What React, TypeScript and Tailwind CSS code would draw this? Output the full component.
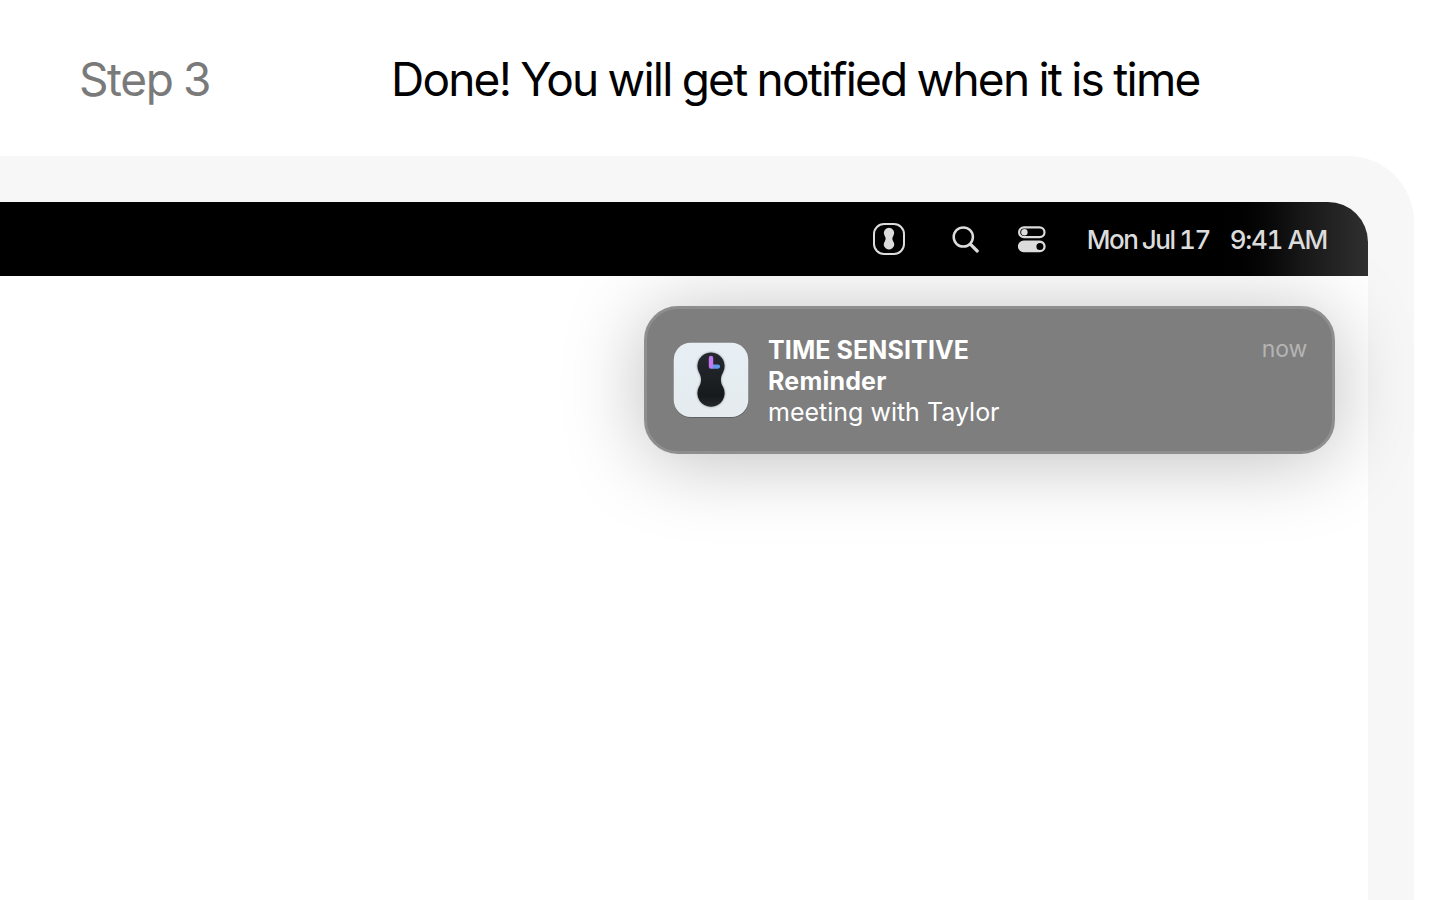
function KettlebellIcon() {
  return (
    <svg width="32" height="32" viewBox="0 0 32 32" fill="none">
      <rect x="1" y="1" width="30" height="30" rx="10" stroke="#dcdcdc" strokeWidth="2" />
      <path
        d="M16 4.8A5.2 5.2 0 0 1 20.4 12.8C19 15 19 16.5 20.4 18.7A5.1 5.1 0 1 1 11.6 18.7C13 16.5 13 15 11.6 12.8A5.2 5.2 0 0 1 16 4.8Z"
        fill="#dcdcdc"
      />
    </svg>
  )
}

function SearchIcon() {
  return (
    <svg width="28" height="28" viewBox="0 0 28 28" fill="none" stroke="#dcdcdc">
      <circle cx="11.3" cy="12" r="9.6" strokeWidth="2.5" />
      <path d="M18.3 19.2L25.2 26" strokeWidth="3.2" strokeLinecap="round" />
    </svg>
  )
}

function ControlCenterIcon() {
  return (
    <svg width="28" height="28" viewBox="0 0 28 28" fill="none">
      <rect x="1.1" y="2.4" width="25.4" height="9.8" rx="4.9" stroke="#dcdcdc" strokeWidth="2.2" />
      <circle cx="6.4" cy="7.3" r="3.2" fill="#dcdcdc" />
      <path
        fillRule="evenodd"
        d="M5.7 15.6H21.9a5.7 5.7 0 0 1 0 11.6H5.7a5.7 5.7 0 0 1 0-11.6ZM21.9 17.9a3.5 3.5 0 1 0 0 7a3.5 3.5 0 0 0 0-7Z"
        fill="#dcdcdc"
      />
    </svg>
  )
}

const bodyPath =
  'M38 10.4A13.6 13.6 0 0 1 50 30.4C47.2 35 47.2 40.4 50 44.8A13.6 13.6 0 1 1 26 44.8C28.8 40.4 28.8 35 26 30.4A13.6 13.6 0 0 1 38 10.4Z'

function AppIcon() {
  return (
    <svg width="76" height="76" viewBox="0 0 76 76" fill="none" className="shrink-0">
      <defs>
        <linearGradient id="tile" x1="0" y1="0" x2="0" y2="1">
          <stop stopColor="#e7eff5" />
          <stop offset="1" stopColor="#e5ebee" />
        </linearGradient>
        <linearGradient id="body" x1="0" y1="0" x2="0" y2="1">
          <stop stopColor="#26292e" />
          <stop offset="0.35" stopColor="#1f2327" />
          <stop offset="0.8" stopColor="#171a1c" />
          <stop offset="1" stopColor="#26292b" />
        </linearGradient>
        <filter id="soft" x="-30%" y="-30%" width="160%" height="160%">
          <feGaussianBlur stdDeviation="1.2" />
        </filter>
      </defs>
      <rect x="0.8" y="1.3" width="74.6" height="74.6" rx="17" fill="#5e6265" />
      <rect x="0.7" y="0.7" width="74.6" height="74.4" rx="17" fill="url(#tile)" />
      <path d={bodyPath} fill="#343a40" opacity="0.6" filter="url(#soft)" />
      <path d={bodyPath} fill="url(#body)" />
      <path d="M39 24.6H45" stroke="#5e98e9" strokeWidth="4.2" strokeLinecap="round" />
      <path d="M38 16V24.6" stroke="#c278f0" strokeWidth="4.4" strokeLinecap="round" />
    </svg>
  )
}

function MenuBar() {
  return (
    <div className="relative z-10 flex h-[74px] items-center justify-end rounded-tr-[40px] bg-linear-to-r from-black from-88% via-[#161616] via-95% to-[#303030] pr-[41px] text-[26px] font-medium text-[#dcdcdc] tabular-nums">
      <div className="mr-[47px]">
        <KettlebellIcon />
      </div>
      <div className="mr-[38px]">
        <SearchIcon />
      </div>
      <div className="mr-[41px]">
        <ControlCenterIcon />
      </div>
      <span className="mr-5 tracking-[-1.5px] [word-spacing:-0.9px]">Mon Jul 17</span>
      <span className="tracking-[-1.35px]">9:41 AM</span>
    </div>
  )
}

function Notification() {
  return (
    <div className="mt-[30px] mr-[33px] ml-auto flex h-[148px] w-[691px] items-center rounded-[34px] border-3 border-[#8e8e8e] bg-[#7e7e7e] px-[26px] text-white shadow-[0_6px_80px_rgba(0,0,0,0.26)]">
      <AppIcon />
      <div className="ml-[19px] flex-1 pt-0.5 text-[25px] leading-[31px]">
        <div className="flex justify-between">
          <span className="font-bold tracking-[0.1px]">TIME SENSITIVE</span>
          <span className="-mt-px -mr-px text-[23px] tracking-[-0.2px] text-[#b4b4b4]">now</span>
        </div>
        <div className="font-bold tracking-[0.2px]">Reminder</div>
        <div>meeting with Taylor</div>
      </div>
    </div>
  )
}

export default function App() {
  return (
    <div className="flex h-[900px] w-[1440px] flex-col overflow-hidden bg-white font-['Inter',sans-serif]">
      <header className="flex h-[156px] shrink-0 items-center pt-0.5 pl-[79px] text-[46px] whitespace-nowrap">
        <span className="w-[312px] tracking-[-1.4px] text-[#7a7a7a] [word-spacing:-1px]">Step 3</span>
        <h1 className="tracking-[-1.78px] text-black [word-spacing:-1px]">Done! You will get notified when it is time</h1>
      </header>

      {/* Display bezel, running off the left and bottom edges */}
      <main className="mr-[26px] flex-1 overflow-hidden rounded-tr-[66px] bg-[#f7f7f7] pt-[46px] pr-[46px]">
        <div className="h-full rounded-tr-[40px] bg-white">
          <MenuBar />
          <Notification />
        </div>
      </main>
    </div>
  )
}
